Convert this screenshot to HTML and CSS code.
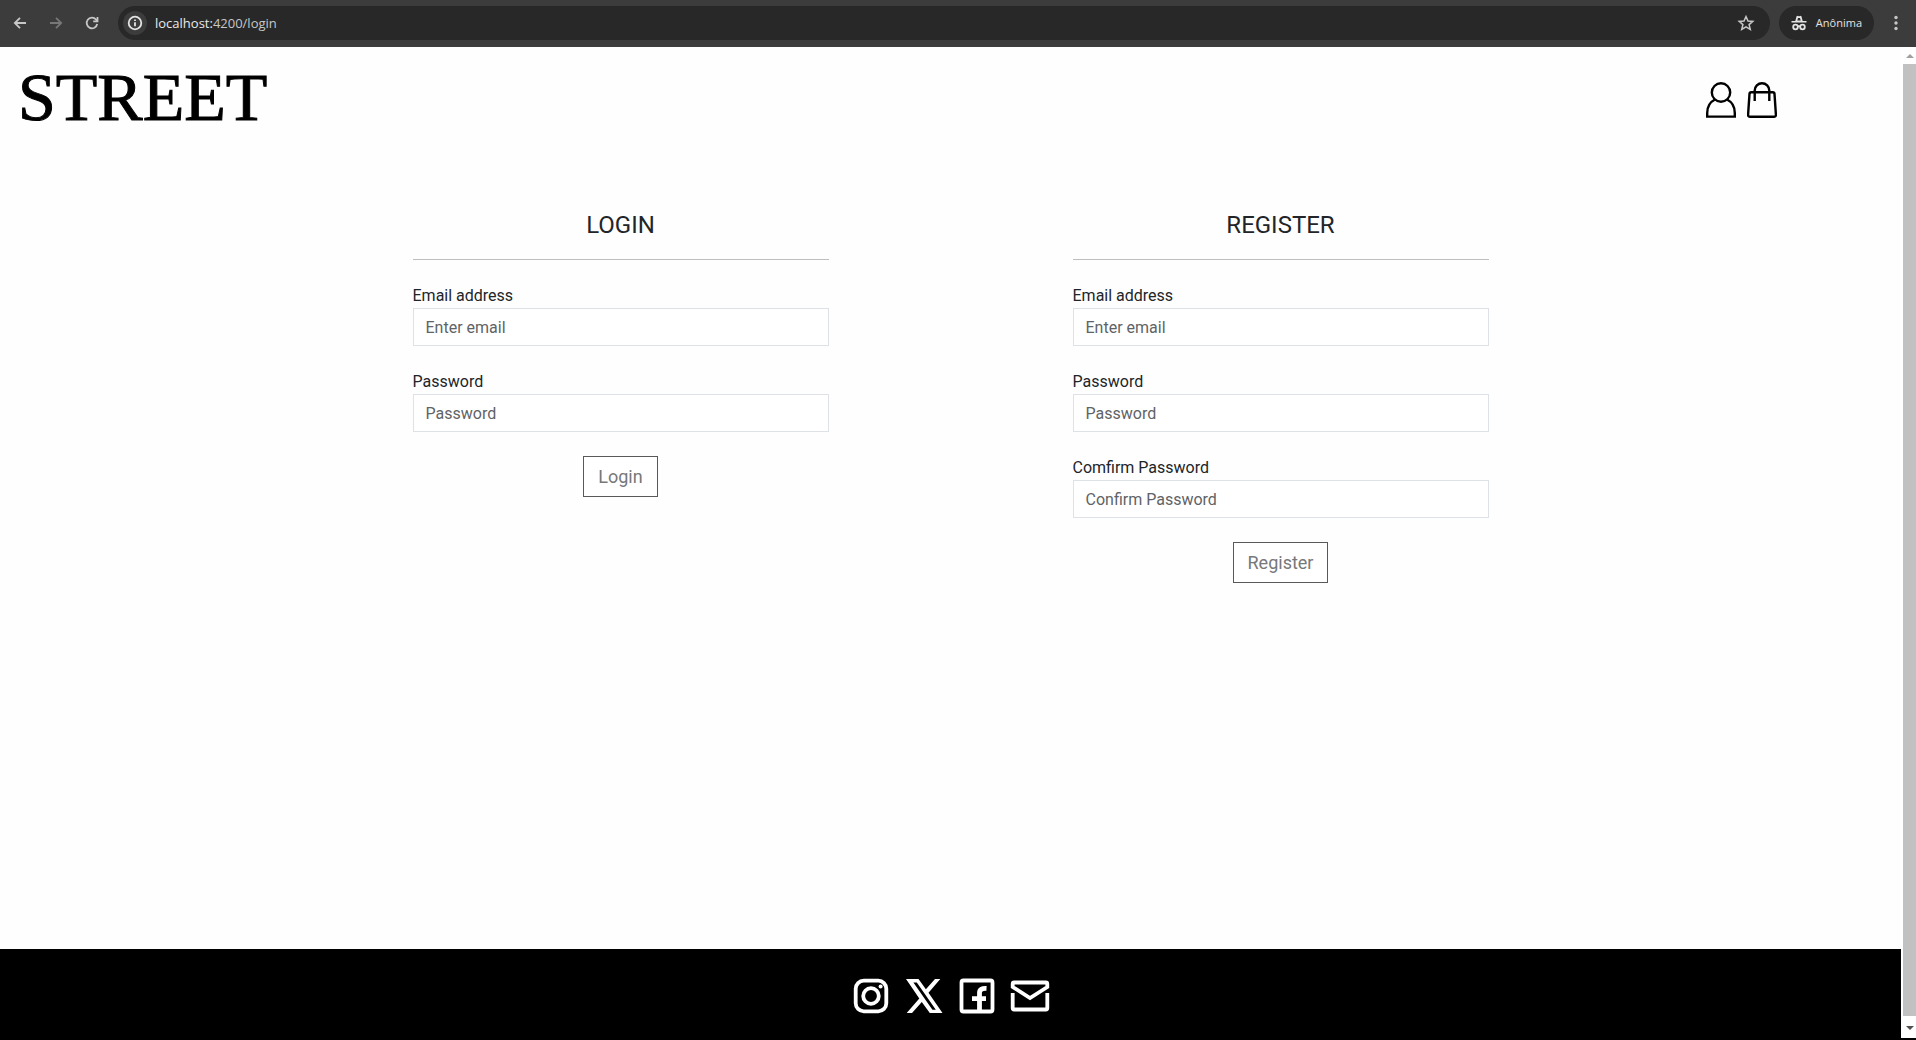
FILE: index.html
```html
<!DOCTYPE html>
<html lang="en">
<head>
<meta charset="utf-8">
<meta name="viewport" content="width=device-width, initial-scale=1">
<title>Street</title>
<link rel="stylesheet" href="styles.css">
</head>
<body>
<div class="browser">
  <nav class="browser-nav" aria-label="Browser">
    <button type="button" class="tool" aria-label="Back"><svg width="16" height="16" viewBox="0 0 16 16"><path d="M14 8H3M8 2.800L2.800 8L8 13.200"/></svg></button>
    <button type="button" class="tool tool-off" aria-label="Forward"><svg width="16" height="16" viewBox="0 0 16 16"><path d="M2 8h11M8 2.800L13.200 8L8 13.200"/></svg></button>
    <button type="button" class="tool" aria-label="Reload"><svg width="16" height="16" viewBox="0 0 16 16"><path d="M13.200 9A5.300 5.300 0 1 1 12 4.500L13.500 6M13.500 2v4.300H9.200"/></svg></button>
  </nav>
  <div class="address">
    <button type="button" class="site-info" aria-label="Site information"><svg width="16" height="16" viewBox="0 0 16 16"><circle cx="8" cy="8" r="6.300"/><path d="M8 7.200v4M8 4.500v1.400"/></svg></button>
    <span class="url">localhost:<span class="url-rest">4200/login</span></span>
    <button type="button" class="star" aria-label="Bookmark"><svg width="18" height="18" viewBox="0 0 18 18"><path d="M9 2.500l2 4.500 4.800.4-3.700 3.200 1.200 4.800L9 12.900l-4.300 2.500 1.200-4.800-3.700-3.200L7 7z"/></svg></button>
  </div>
  <button type="button" class="incognito">
    <svg width="16" height="16" viewBox="0 0 16 16"><path class="solid" d="M4.300 6L5.500 1.500Q5.800.6 6.700.9L8 1.300L9.300.9Q10.200.6 10.500 1.500L11.700 6H15.500V7.500H.5V6z"/><path class="hole" d="M6.300 5.500L7 3h2l.7 2.500z"/><circle cx="4.500" cy="12" r="2.300"/><circle cx="11.500" cy="12" r="2.300"/><path d="M6.800 11.500q1.200-.8 2.400 0"/></svg>
    Anônima
  </button>
  <button type="button" class="more" aria-label="Menu"><svg width="4" height="16" viewBox="0 0 4 16"><circle cx="2" cy="2.500" r="1.700"/><circle cx="2" cy="8" r="1.700"/><circle cx="2" cy="13.500" r="1.700"/></svg></button>
</div>

<div class="viewport">
  <div class="page">
    <header class="header">
      <a class="logo" href="#">STREET</a>
      <nav class="actions">
        <a href="#" aria-label="Account"><svg width="30" height="36" viewBox="0 0 30 36"><circle cx="15" cy="10.500" r="9.200"/><path d="M9 17.500C4 20 1.200 25 1.200 31v3.600h27.600V31c0-6-2.800-11-7.800-13.500"/></svg></a>
        <a href="#" aria-label="Shopping bag"><svg width="30" height="36" viewBox="0 0 30 36"><path d="M4.200 10.300h21.600q1.600 0 1.700 1.600l1.400 20.700q.1 2.200-2 2.200H3.100q-2.100 0-2-2.200L2.500 11.900q.1-1.600 1.700-1.600zM7.700 19V8.500a7.300 7.300 0 0 1 14.600 0V19"/></svg></a>
      </nav>
    </header>

    <main class="forms">
      <form class="form">
        <h1 class="title">LOGIN</h1>
        <div class="field">
          <label for="login-email">Email address</label>
          <input id="login-email" type="email" placeholder="Enter email">
        </div>
        <div class="field">
          <label for="login-password">Password</label>
          <input id="login-password" type="password" placeholder="Password">
        </div>
        <button type="button" class="submit">Login</button>
      </form>
      <form class="form">
        <h1 class="title">REGISTER</h1>
        <div class="field">
          <label for="register-email">Email address</label>
          <input id="register-email" type="email" placeholder="Enter email">
        </div>
        <div class="field">
          <label for="register-password">Password</label>
          <input id="register-password" type="password" placeholder="Password">
        </div>
        <div class="field">
          <label for="register-confirm">Comfirm Password</label>
          <input id="register-confirm" type="password" placeholder="Confirm Password">
        </div>
        <button type="button" class="submit">Register</button>
      </form>
    </main>

    <footer class="footer">
      <a href="#" aria-label="Instagram"><svg width="40" height="40" viewBox="0 0 40 40"><rect x="4.700" y="4.700" width="30.600" height="30.600" rx="8"/><circle cx="20" cy="20" r="7.800"/><circle class="dot" cx="29.600" cy="10.600" r="2"/></svg></a>
      <a href="#" aria-label="X"><svg width="40" height="40" viewBox="0 0 40 40"><path class="solid" fill-rule="evenodd" d="M2 3h12.500l7.400 10.300L31 3h5.300L24.500 16.800 38.500 37H25.800l-8-11L8 37H2.700l12.600-14.500zM9.400 6.500l19 27.200h3.400L12.800 6.500z"/></svg></a>
      <a href="#" aria-label="Facebook"><svg width="40" height="40" viewBox="0 0 40 40"><rect x="4.500" y="4.500" width="31" height="31" rx="2"/><path class="wide" d="M22.500 35V17q0-5 7-4.500M15 22.700h14"/></svg></a>
      <a href="#" aria-label="Email"><svg width="40" height="40" viewBox="0 0 40 40"><path d="M2.700 11V8q0-1.500 1.500-1.500h31.600q1.500 0 1.500 1.500v3L20 22zM2.700 17v15q0 1.500 1.500 1.500h31.600q1.500 0 1.500-1.500V17"/></svg></a>
    </footer>
  </div>
  <div class="scrollbar" aria-hidden="true">
    <span class="arrow arrow-up"></span>
    <span class="thumb"></span>
    <span class="arrow arrow-down"></span>
  </div>
</div>
</body>
</html>
```
FILE: styles.css
```css
* { box-sizing: border-box; }

body {
  margin: 0;
  min-height: 100vh;
  display: flex;
  flex-direction: column;
  background: #fefefe;
  color: #212529;
  font: 16px/24px Roboto, sans-serif;
}

button, input { font: inherit; }
svg { display: block; fill: none; stroke: currentColor; }

/* Browser toolbar */
.browser {
  display: flex;
  align-items: center;
  height: 47px;
  padding: 0 18px 2px 12px;
  background: #3c3c3c;
  color: #c7c7c7;
}
.browser button {
  padding: 0;
  border: 0;
  background: none;
  color: inherit;
}
.browser svg { stroke-width: 1.800; }
.browser-nav { display: flex; gap: 20px; margin-right: 18px; }
.browser .tool-off { color: #777; }
.address {
  flex: 1;
  display: flex;
  align-items: center;
  height: 34px;
  padding: 0 15px 0 5px;
  border-radius: 17px;
  background: #282828;
}
.browser .site-info {
  padding: 4px;
  border-radius: 50%;
  background: #3c3c3c;
  color: #e3e3e3;
}
.url {
  flex: 1;
  margin-left: 8px;
  color: #e8e8e8;
  font: 13px/20px "Open Sans", sans-serif;
}
.url-rest { color: #c7c7c7; }
.star svg { stroke-width: 1.500; }
.browser .incognito {
  display: flex;
  align-items: center;
  gap: 9px;
  height: 34px;
  margin-left: 9px;
  padding: 0 12px;
  border-radius: 17px;
  background: #282828;
  color: #e3e3e3;
  font: 500 11px/16px "Open Sans", sans-serif;
}
.incognito .solid { fill: currentColor; stroke: none; }
.incognito .hole { fill: #282828; stroke: none; }
.browser .more { margin-left: 20px; }
.more svg { fill: currentColor; stroke: none; }

/* Page frame */
.viewport {
  flex: 1;
  display: flex;
  border-bottom: 2px solid #000;
}
.page {
  flex: 1;
  display: flex;
  flex-direction: column;
}
.scrollbar {
  display: flex;
  flex-direction: column;
  align-items: center;
  width: 15px;
  padding: 6px 0 8px 2px;
  background: #fff;
}
.thumb {
  flex: 1;
  align-self: stretch;
  margin: 6px 0 10px;
  background: #c1c1c1;
}
.arrow {
  border: 4px solid transparent;
}
.arrow-up { border-top: 0; border-bottom-color: #a0a0a0; margin-top: 1px; }
.arrow-down { border-bottom: 0; border-top-color: #505050; }

/* Header */
.header {
  display: flex;
  align-items: center;
  justify-content: space-between;
  height: 100px;
  padding: 0 124px 0 18px;
}
.logo {
  color: #000;
  font: 68px/68px "Liberation Serif", serif;
  text-decoration: none;
  -webkit-text-stroke: 1px #000;
}
.actions {
  display: flex;
  gap: 11px;
  padding-top: 6px;
  color: #000;
}
.actions a, .footer a { color: inherit; }
.actions svg { stroke-width: 2.400; }

/* Forms */
.forms {
  display: grid;
  grid-template-columns: 1fr 1fr;
  justify-items: center;
  align-items: start;
  width: 100%;
  max-width: 1320px;
  margin: 0 auto;
  padding: 64px 0;
}
.form {
  display: flex;
  flex-direction: column;
  align-items: center;
  gap: 24px;
  width: 416px;
  max-width: 100%;
}
.title {
  width: 100%;
  margin: 0;
  padding-bottom: 20px;
  border-bottom: 1px solid #bcbec0;
  font-size: 24px;
  line-height: 28px;
  font-weight: 400;
  text-align: center;
}
.field { width: 100%; }
.field label { display: block; }
.field input {
  display: block;
  width: 100%;
  height: 38px;
  padding: 0 12px;
  border: 1px solid #dee2e6;
  border-radius: 0;
  background: #fff;
  color: #212529;
}
.field input::placeholder { color: #5f6366; opacity: 1; }
.submit {
  height: 41px;
  padding: 0 14px;
  border: 1px solid #58595b;
  background: #fff;
  color: #77787a;
  font-size: 18px;
}

/* Footer */
.footer {
  display: flex;
  align-items: center;
  justify-content: center;
  gap: 13px;
  height: 89px;
  margin-top: auto;
  padding-top: 4px;
  background: #000;
  color: #fff;
}
.footer svg { stroke-width: 3.800; }
.footer .solid, .footer .dot { fill: currentColor; stroke: none; }
.footer .wide { stroke-width: 4.800; }
```
